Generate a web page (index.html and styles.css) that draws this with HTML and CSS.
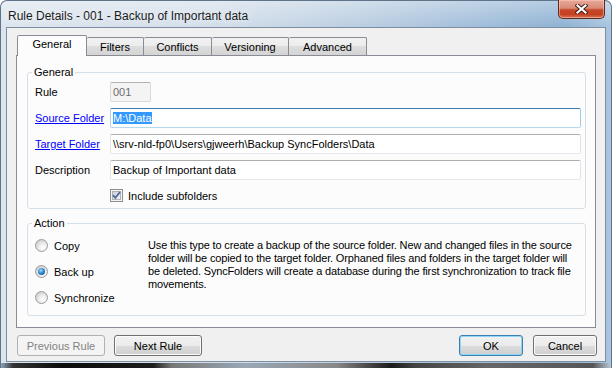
FILE: index.html
```html
<!DOCTYPE html>
<html lang="en">
<head>
    <meta charset="UTF-8">
    <title>Rule Details - 001 - Backup of Important data</title>
    <link rel="stylesheet" href="styles.css">
</head>
<body>

<div class="window">
    <div class="titlebar">
        <span class="title">Rule Details - 001 - Backup of Important data</span>
        <button class="close-btn" aria-label="Close">
            <svg width="13" height="10" viewBox="0 0 13 10">
                <path d="M2.5 1.5 L10.5 8.5 M10.5 1.5 L2.5 8.5" stroke="#3b1a12" stroke-width="4" stroke-linecap="square"/>
                <path d="M2.5 1.5 L10.5 8.5 M10.5 1.5 L2.5 8.5" stroke="#ffffff" stroke-width="2.2" stroke-linecap="square"/>
            </svg>
        </button>
    </div>

    <div class="client">
        <div class="tabs">
            <div class="tab tab-active">General</div>
            <div class="tab">Filters</div>
            <div class="tab">Conflicts</div>
            <div class="tab">Versioning</div>
            <div class="tab">Advanced</div>
        </div>

        <div class="tab-page">
            <div class="group">
                <span class="group-title">General</span>
                <div class="field">
                    <span class="field-label">Rule</span>
                    <div class="text-input text-input-rule">001</div>
                </div>
                <div class="field">
                    <a class="field-label link" href="#">Source Folder</a>
                    <div class="text-input text-input-focus"><span class="selection">M:\Data</span></div>
                </div>
                <div class="field">
                    <a class="field-label link" href="#">Target Folder</a>
                    <div class="text-input">\\srv-nld-fp0\Users\gjweerh\Backup SyncFolders\Data</div>
                </div>
                <div class="field">
                    <span class="field-label">Description</span>
                    <div class="text-input">Backup of Important data</div>
                </div>
                <div class="check-row">
                    <svg class="checkbox" width="13" height="13" viewBox="0 0 13 13">
                        <defs>
                            <linearGradient id="cbFill" x1="0" y1="0" x2="1" y2="1">
                                <stop offset="0" stop-color="#cbcfd5"/>
                                <stop offset="1" stop-color="#f7f7f7"/>
                            </linearGradient>
                        </defs>
                        <rect x="0.5" y="0.5" width="12" height="12" fill="#f4f4f4" stroke="#8e8f8f"/>
                        <rect x="2.5" y="2.5" width="8" height="8" fill="url(#cbFill)" stroke="#aeb3b9"/>
                        <path d="M3 6.2 L5.3 8.8 L10 3" fill="none" stroke="#5466a0" stroke-width="1.8"/>
                    </svg>
                    <span>Include subfolders</span>
                </div>
            </div>

            <div class="group group-action">
                <span class="group-title">Action</span>
                <div class="radio-list">
                    <div class="radio-item"><span class="radio"></span>Copy</div>
                    <div class="radio-item"><span class="radio radio-checked"></span>Back up</div>
                    <div class="radio-item"><span class="radio"></span>Synchronize</div>
                </div>
                <p class="action-text">
                    Use this type to create a backup of the source folder. New and changed files in the source<br>
                    folder will be copied to the target folder. Orphaned files and folders in the target folder will<br>
                    be deleted. SyncFolders will create a database during the first synchronization to track file<br>
                    movements.
                </p>
            </div>
        </div>

        <div class="buttons">
            <button class="btn btn-wide" disabled>Previous Rule</button>
            <button class="btn btn-wide">Next Rule</button>
            <span class="spacer"></span>
            <button class="btn btn-narrow btn-default">OK</button>
            <button class="btn btn-narrow">Cancel</button>
        </div>
    </div>
</div>

</body>
</html>
```

FILE: styles.css
```css
body {
    margin: 0;
    background-color: #fff;
    font-family: "Liberation Sans", Arial, sans-serif;
    font-size: 11px;
    color: #000;
}
.window {
    width: 612px;
    height: 368px;
    box-sizing: border-box;
    border: 1px solid #5f7389;
    border-bottom: none;
    border-radius: 7px 7px 0 0;
    padding-bottom: 6px;
    display: flex;
    flex-direction: column;
    background:
        linear-gradient(to right, #8fa5bb 0%, #333 2%, #0b0b0b 10%, #1e1e1e 25%, #777 28%, #9aa8b6 40%, #888 55%, #1a1a1a 64%, #444 68%, #666 80%, #555 97%, #b9c9d8 100%) no-repeat left bottom / 100% 5px,
        linear-gradient(to bottom, rgba(255, 255, 255, 0.35), rgba(255, 255, 255, 0) 26px),
        linear-gradient(to right, #dce5ee 0%, #d3deea 35%, #b9cde1 60%, #9ebcd9 80%, #8fb2d3 92%, #a9c5df 100%);
}
.titlebar {
    flex: none;
    height: 26px;
    display: flex;
    justify-content: space-between;
    align-items: flex-start;
    padding: 0 6px 0 7px;
}
.title {
    margin-top: 7px;
    font-size: 12px;
    line-height: 16px;
    color: #1b1b1b;
    text-shadow: 0 0 6px rgba(255, 255, 255, 0.9);
}
.close-btn {
    width: 47px;
    height: 19px;
    margin-top: -1px;
    padding: 0;
    display: flex;
    align-items: center;
    justify-content: center;
    border: 1px solid #5e2a1e;
    border-top: none;
    border-radius: 0 0 5px 5px;
    background: linear-gradient(to bottom, #e9a99a 0%, #d88a76 45%, #c7472a 55%, #c4401f 80%, #d9745a 100%);
    box-shadow: inset 0 0 0 1px rgba(255, 210, 200, 0.5);
}
.client {
    flex: 1;
    min-height: 0;
    margin: 0 5px;
    border: 1px solid #7d8ea1;
    background-color: #f0f0f0;
    display: flex;
    flex-direction: column;
    padding: 7px 9px 5px 9px;
}
.tabs {
    flex: none;
    display: grid;
    grid-template-columns: 70px 57px 68px 77px 78px;
    align-items: end;
    height: 20px;
    margin-left: 1px;
}
.tab {
    height: 18px;
    box-sizing: border-box;
    border: 1px solid #898c95;
    border-bottom: none;
    border-radius: 2px 2px 0 0;
    background: linear-gradient(to bottom, #f2f2f2 0%, #ebebeb 50%, #dddddd 50%, #d4d4d4 100%);
    text-align: center;
    line-height: 16px;
    padding-top: 1px;
}
.tab + .tab {
    border-left: none;
}
.tab-active {
    position: relative;
    z-index: 1;
    height: 21px;
    margin-bottom: -1px;
    padding-top: 0;
    background: #fcfcfc;
}
.tab-page {
    flex: 1;
    min-height: 0;
    background-color: #fcfcfc;
    border: 1px solid #898c95;
    padding: 16px 9px 10px 10px;
}
.group {
    position: relative;
    border: 1px solid #d5dfe5;
    border-radius: 3px;
    padding: 9px 4px 6px 7px;
}
.group + .group {
    margin-top: 14px;
}
.group-title {
    position: absolute;
    top: -7px;
    left: 4px;
    padding: 0 2px;
    background-color: #fcfcfc;
    line-height: 13px;
}
.field {
    display: flex;
    align-items: center;
    height: 20px;
}
.field + .field {
    margin-top: 6px;
}
.field-label {
    width: 75px;
    flex: none;
}
.link {
    color: #0000ff;
    text-decoration: underline;
}
.text-input {
    flex: 1;
    height: 20px;
    box-sizing: border-box;
    border: 1px solid;
    border-color: #abadb3 #e2e3ea #e3e9ef #e2e3ea;
    border-radius: 2px;
    background-color: #fff;
    padding: 0 2px;
    line-height: 18px;
    white-space: nowrap;
    overflow: hidden;
}
.text-input-rule {
    flex: none;
    width: 41px;
    background-color: #f4f4f4;
    border-color: #adb2b5 #dadada #dadada #dadada;
    color: #6d6d6d;
}
.text-input-focus {
    border-color: #3d7bad #a4c9e3 #b7d9ed #b5cfe7;
}
.selection {
    background-color: #3399ff;
    color: #fff;
}
.check-row {
    display: flex;
    align-items: center;
    gap: 5px;
    height: 13px;
    margin: 9px 0 0 75px;
}
.group-action {
    display: flex;
    padding-top: 15px;
    padding-bottom: 11px;
}
.radio-list {
    width: 113px;
    flex: none;
    display: flex;
    flex-direction: column;
    gap: 13px;
}
.radio-item {
    display: flex;
    align-items: center;
    gap: 6px;
    height: 13px;
}
.radio {
    position: relative;
    width: 13px;
    height: 13px;
    box-sizing: border-box;
    border-radius: 50%;
    border: 1px solid #9a9a9a;
    background: radial-gradient(circle at 65% 70%, #ffffff 0%, #eeeeee 35%, #cfcfcf 80%);
}
.radio-checked::after {
    content: "";
    position: absolute;
    left: 2px;
    top: 2px;
    width: 7px;
    height: 7px;
    border-radius: 50%;
    background: radial-gradient(circle at 40% 35%, #a8ddff 0%, #2f8ad0 45%, #0d4a86 100%);
}
.action-text {
    margin: 0;
    line-height: 13px;
    white-space: nowrap;
    letter-spacing: -0.15px;
}
.buttons {
    flex: none;
    display: flex;
    gap: 9px;
    margin: 7px -1px 0 1px;
}
.spacer {
    flex: 1;
}
.btn {
    height: 21px;
    box-sizing: border-box;
    padding: 0;
    border: 1px solid #707070;
    border-radius: 3px;
    background: linear-gradient(to bottom, #f2f2f2 0%, #ebebeb 50%, #dddddd 50%, #cfcfcf 100%);
    box-shadow: inset 0 0 0 1px #fbfbfb;
    font-family: inherit;
    font-size: 11px;
    color: #000;
}
.btn-wide {
    width: 88px;
}
.btn-narrow {
    width: 64px;
}
.btn-default {
    border-color: #3c7fb1;
    box-shadow: inset 0 0 0 1px #8ed6f8;
    margin-right: 1px;
}
.btn:disabled {
    border-color: #adb2b5;
    background: #f4f4f4;
    box-shadow: none;
    color: #838383;
}
```
